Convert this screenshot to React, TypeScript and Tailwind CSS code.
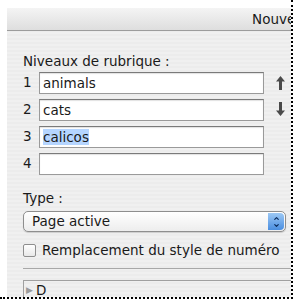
import { ChevronUp, ChevronDown } from 'lucide-react'

function LevelRow({ n, value, selected }: { n: number; value: string; selected?: boolean }) {
  return (
    <div className="flex h-[27px] items-center">
      <span className="w-[16px] text-[13.5px] text-[#1a1a1a]">{n}</span>
      <div className="flex h-[22px] w-[225px] items-center border border-[#9a9a9a] border-t-[#7a7a7a] bg-white px-[3px] shadow-[inset_0_1px_1px_rgba(0,0,0,0.12)]">
        <span className={'text-[13.5px] leading-[16px] text-[#1a1a1a] ' + (selected ? 'bg-[#b5d5ff]' : '')}>{value}</span>
      </div>
    </div>
  )
}

function ArrowUp() {
  return (
    <svg width="9" height="14" viewBox="0 0 9 14">
      <path d="M4.5 0 L9 5.5 L6 5.5 L6 14 L3 14 L3 5.5 L0 5.5 Z" fill="#4a4a4a" />
    </svg>
  )
}

function ArrowDown() {
  return (
    <svg width="9" height="14" viewBox="0 0 9 14">
      <path d="M4.5 14 L9 8.5 L6 8.5 L6 0 L3 0 L3 8.5 L0 8.5 Z" fill="#4a4a4a" />
    </svg>
  )
}

export default function App() {
  return (
    <div className="relative h-[303px] w-[295px] overflow-hidden bg-white font-['DejaVu_Sans',sans-serif] text-[#1a1a1a]">
      <div className="absolute left-[291px] top-0 h-[299px] border-l-2 border-dotted border-black" />
      <div className="absolute left-0 top-[297px] w-[293px] border-t-2 border-dotted border-black" />
      <div className="ml-[7px] mt-[8px] h-[290px] w-[284px] overflow-hidden bg-[repeating-linear-gradient(0deg,#f0f0f0_0px,#f0f0f0_2px,#ececec_2px,#ececec_4px)]">
        <div className="flex h-[23px] items-center justify-end overflow-hidden border-b border-[#9c9c9c] bg-gradient-to-b from-[#f4f4f4] to-[#dedede]">
          <span className="mr-[-8px] whitespace-nowrap text-[13.5px] text-[#1a1a1a]">Nouvel</span>
        </div>
        <div className="pl-[16px] pt-[23px]">
          <div className="h-[15px] text-[13.5px] leading-[15px]">Niveaux de rubrique :</div>
          <div className="flex">
            <div className="flex flex-col">
              <LevelRow n={1} value="animals" />
              <LevelRow n={2} value="cats" />
              <LevelRow n={3} value="calicos" selected />
              <LevelRow n={4} value="" />
            </div>
            <div className="ml-[12px] flex flex-col items-center pt-[7px]">
              <ArrowUp />
              <div className="h-[12px]" />
              <ArrowDown />
            </div>
          </div>
          <div className="mt-[14px] h-[15px] text-[13.5px] leading-[15px]">Type :</div>
          <div className="mt-[5px] flex h-[21px] w-[263px] items-center justify-between rounded-[5px] border border-[#8e8e8e] bg-gradient-to-b from-white to-[#ededed] pl-[8px] pr-[1px] shadow-[0_1px_1px_rgba(0,0,0,0.15)]">
            <span className="text-[13.5px]">Page active</span>
            <div className="flex h-[17px] w-[16px] flex-col items-center justify-center rounded-r-[4px] bg-gradient-to-b from-[#9cc8f4] to-[#4a8ee0]">
              <ChevronUp size={7} strokeWidth={4} className="text-[#0a2a5a]" />
              <ChevronDown size={7} strokeWidth={4} className="text-[#0a2a5a]" />
            </div>
          </div>
          <div className="mt-[10px] flex h-[16px] items-center">
            <div className="h-[13px] w-[13px] rounded-[2px] border border-[#8e8e8e] bg-gradient-to-b from-white to-[#e8e8e8]" />
            <span className="ml-[6px] whitespace-nowrap text-[13.5px] leading-[16px]">Remplacement du style de numéro</span>
          </div>
          <div className="mt-[10px] h-px w-[268px] bg-[#a8a8a8]" />
          <div className="mt-[11px] flex h-[20px] items-center border-l border-t border-[#a0a0a0] pl-[2px]">
            <span className="text-[9px] text-[#9a9a9a]">▶</span>
            <span className="ml-[3px] text-[13.5px]">D</span>
          </div>
        </div>
      </div>
    </div>
  )
}
